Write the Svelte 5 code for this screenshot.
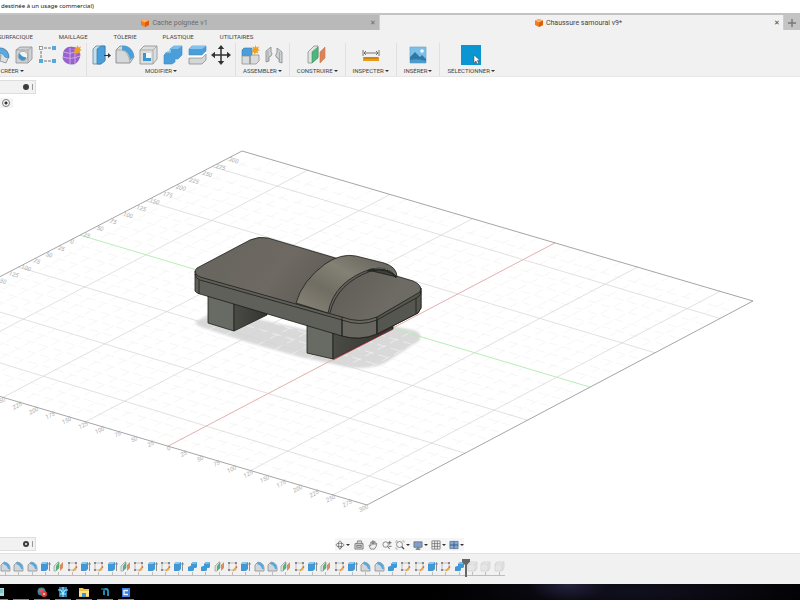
<script>
  const workspaces = ['SURFACIQUE', 'MAILLAGE', 'TÔLERIE', 'PLASTIQUE', 'UTILITAIRES'];

  const groups = [
    { label: 'CRÉER', wide: true, tools: ['revolve', 'hole', 'pattern', 'form'] },
    { label: 'MODIFIER', tools: ['presspull', 'fillet', 'shell', 'combine', 'split', 'move'] },
    { label: 'ASSEMBLER', tools: ['component', 'joint'] },
    { label: 'CONSTRUIRE', tools: ['plane'] },
    { label: 'INSPECTER', tools: ['measure'] },
    { label: 'INSÉRER', tools: ['image'] },
    { label: 'SÉLECTIONNER', tools: ['select'] }
  ];

  // f fillet, e extrude, p plane, s sketch, c combine, x rolled back
  const features = [...'fffepsesepsesecc' + 'pseffpsepse' + 'ffcssesc' + 'xxx'];
  const featureNames = {
    f: 'Congé', e: 'Extrusion', p: 'Plan', s: 'Esquisse', c: 'Combiner', x: 'Fonction inactive'
  };

  const navTools = [
    { id: 'orbit', menu: true },
    { id: 'look' },
    { id: 'pan' },
    { id: 'zoom' },
    { id: 'fit', menu: true },
    { id: 'display', menu: true },
    { id: 'grid', menu: true },
    { id: 'views', menu: true }
  ];

  const apps = ['notes', '', 'browser', 'network', 'files', 'fusion', 'capture'];

  // Corners of the ground grid
  const N = [242, 151];
  const E = [753, 301];
  const S = [367, 505];
  const W = [-147, 353];
  const border = [N, E, S, W].map((p) => p.join(',')).join(' ');

  const mix = (p, q, t) => [p[0] + (q[0] - p[0]) * t, p[1] + (q[1] - p[1]) * t];
  const seg = (p, q) => `M${p[0]} ${p[1]}L${q[0]} ${q[1]}`;

  // Point of each border edge at a given x
  const onLeft = (x) => mix(N, W, (N[0] - x) / (N[0] - W[0]));
  const onRight = (x) => mix(E, S, (E[0] - x) / (E[0] - S[0]));
  const onTop = (x) => mix(N, E, (x - N[0]) / (E[0] - N[0]));
  const onBottom = (x) => mix(W, S, (x - W[0]) / (S[0] - W[0]));

  // x of the i-th 25 mm step, counted from the axis
  const leftX = (i) => 80 + (i > 0 ? 13.2 : 12.3) * i;
  const rightX = (i) => 590 + (i > 0 ? 13 : 12.5) * i;

  let major = '';
  let minor = '';
  for (let i = -17; i <= 11; i++) {
    const d = seg(onLeft(leftX(i)), onRight(rightX(i)));
    if (i % 5) minor += d;
    else if (i) major += d;
  }
  for (let i = -18; i <= 11; i++) {
    const d = seg(onTop(555 + 16.5 * i), onBottom(168 + 16.5 * i));
    if (i % 5) minor += d;
    else if (i) major += d;
  }

  const leftLabels = [];
  for (let i = 12; i >= -6; i--) {
    leftLabels.push({ p: onLeft(leftX(i)), t: Math.abs(i * 25) });
  }
  const bottomLabels = [];
  for (let i = -10; i <= 12; i++) {
    bottomLabels.push({ p: onBottom(168 + 16.5 * i), t: Math.abs(i * 25) });
  }
</script>

{#snippet cube()}
  <svg class="cube" viewBox="0 0 8 8" aria-hidden="true">
    <path d="M4 0 8 1.6V6L4 8 0 6V1.6z" fill="#f47b20" />
    <path d="M4 0 8 1.6 4 3.4 0 1.6z" fill="#ffb26b" />
    <path d="M4 3.4 8 1.6V6L4 8z" fill="#d95d0c" />
  </svg>
{/snippet}

{#snippet star()}
  <path
    d="M15.5 0l1 2.6 2.6-1-1.2 2.5 2.1 1.1-2.5.8.9 2.6-2.4-1.2-1.3 2.4-.8-2.6-2.5.7 1.4-2.3-2-1.2 2.5-.5-.9-2.4 2.3 1.1z"
    fill="#f0a01c"
  />
{/snippet}

{#snippet toolIcon(id)}
  <svg class="tool-icon" viewBox="0 0 20 20" aria-hidden="true">
    {#if id === 'revolve'}
      <path d="M4 6q7-6 13 0l2 5-3 7-6-2 1-6-7 1z" fill="#dcdfe2" stroke="#858a8e" stroke-width=".8" />
      <path d="M5 5q8-5 13 3l1 5-4-1q-2-5-9-3z" fill="#5aa9e0" stroke="#3a7fb2" stroke-width=".6" />
    {:else if id === 'hole'}
      <path d="M2 5l4-3h12v12l-4 4H2z" fill="#cfd1d2" stroke="#8d9092" stroke-width=".8" />
      <path d="M2 5h12v13M14 5l4-3" fill="none" stroke="#999" stroke-width=".7" />
      <circle cx="9" cy="11" r="4.8" fill="#f3f3f3" stroke="#8b8e90" stroke-width=".7" />
      <path d="M5.500 8q2 4 7 4.500-1 3-4 3-4-1-4-4.500z" fill="#3c94cf" />
    {:else if id === 'pattern'}
      <path d="M3 6v8M6 3h8M6 16h8" fill="none" stroke="#555" stroke-width=".8" stroke-dasharray="3 1" />
      <rect x="1.500" y="1.500" width="3" height="3" fill="#fff" stroke="#777" stroke-width=".7" />
      <path d="M14 1h4v4h-4zM1 14h4v4H1zM14 14h4v4h-4z" fill="#55a7df" />
    {:else if id === 'form'}
      <path d="M2 6q2-4 7-4 6 0 8 4l1 4q-1 7-6 9H8Q2 18 1 13z" fill="#9863cb" stroke="#8455b8" stroke-width=".7" />
      <path d="M2 7q6 3 11 0l4 0M8 3v16M13 7v12M1 12q8 3 17-1" fill="none" stroke="#cda7ed" />
      {@render star()}
    {:else if id === 'presspull'}
      <path d="M2 4l3-3h9v14l-4 4H2z" fill="#c5dff0" stroke="#668799" stroke-width=".8" />
      <path d="M6 4l4-3h4v15l-4 3H6z" fill="#4a9fd9" stroke="#347aa9" stroke-width=".7" />
      <path d="M13 10h4v-2l3 2.500-3 2.500v-2h-4z" fill="#333" />
    {:else if id === 'fillet'}
      <path d="M1 5l4-4h5q8 2 9 11l-4 6H1z" fill="#d6d8d9" stroke="#7d8183" stroke-width=".8" />
      <path d="M7 1h4q7 2 8 11l-4 3q-1-9-8-10z" fill="#4b9fda" />
      <path d="M1 5h5q8 1 9 13" fill="none" stroke="#999" stroke-width=".7" />
    {:else if id === 'shell'}
      <path d="M1 5l4-4h13v13l-4 5H1z" fill="#dcdede" stroke="#8a8e90" stroke-width=".8" />
      <path d="M1 5h13v14M14 5l4-4" fill="none" stroke="#999" stroke-width=".7" />
      <path d="M4 8h8v8H4z" fill="#f7f7f7" />
      <path d="M4 8h3v5h5v3H4z" fill="#3e95cf" />
    {:else if id === 'combine'}
      <path d="M1 10l3-3h3V4l4-3h8v9l-4 4h-3v3l-3 2H1z" fill="#4a9eda" stroke="#4089bd" stroke-width=".6" />
      <path d="M4 7h3V4l4-3h8l-4 3H8v4H1z" fill="#7dbde9" />
    {:else if id === 'split'}
      <path d="M2 4l3-3h14v5l-4 4H2z" fill="#4a9eda" stroke="#4089bd" stroke-width=".6" />
      <path d="M5 1h14l-4 3H2z" fill="#83c3ed" />
      <path d="M2 13h13l4-4v6l-4 4H2z" fill="#d4d6d7" stroke="#8d9193" stroke-width=".8" />
      <path d="M1 11.500h14l4-4" fill="none" stroke="#fff" stroke-width="1.500" />
    {:else if id === 'move'}
      <path d="M10 2v16M2 10h16" stroke="#333" stroke-width="1.500" />
      <path d="M10 0l3.200 4H6.800zM10 20l3.200-4H6.800zM0 10l4-3.200v6.400zM20 10l-4-3.200v6.400z" fill="#333" />
    {:else if id === 'component'}
      <path d="M2 5l2-2h8v8H2z" fill="#4a9eda" stroke="#347eb3" stroke-width=".6" />
      <path d="M2 11h8v8H2zM10 11l2-1h7v6l-3 3h-6zM10 19v-8" fill="#d9dbdc" stroke="#909496" stroke-width=".8" />
      {@render star()}
    {:else if id === 'joint'}
      <path d="M2 6l5-4v5q2 1 0 4l-2 1v4l-3 1z" fill="#cfd2d3" stroke="#85898b" stroke-width=".8" />
      <path d="M18 7l-5-4v5q-3 2 0 5l2 1v3l3 1z" fill="#cfd2d3" stroke="#85898b" stroke-width=".8" />
      <path d="M4 6v10M15.500 7v9" stroke="#999" stroke-width=".7" />
    {:else if id === 'plane'}
      <path d="M1 7l6-6h4v11l-6 6H1z" fill="#e1e4e3" stroke="#85908b" stroke-width=".8" />
      <path d="M5 7l6-5v11l-6 5z" fill="#4fb67a" stroke="#3b9463" stroke-width=".6" />
      <path d="M13 7l5-5v11l-5 5z" fill="#dd8358" stroke="#cf7448" stroke-width=".6" />
    {:else if id === 'measure'}
      <path d="M2 5v6M18 5v6M3 8h14M5 6L3 8l2 2M15 6l2 2-2 2" fill="none" stroke="#555" stroke-width=".8" />
      <path d="M2 12h16v4H2z" fill="#eb9b17" />
      <path d="M4 12v2M6 12v2M8 12v2M10 12v2M12 12v2M14 12v2M16 12v2" stroke="#9c5e00" stroke-width=".7" />
    {:else if id === 'image'}
      <path d="M2 2h16v16H2z" fill="#7cc0ea" stroke="#6ba6cc" stroke-width=".7" />
      <circle cx="14" cy="6" r="1.800" fill="#f3fbff" />
      <path d="M2 12l5-5 5 5 2-2 4 4v4H2z" fill="#2e78a8" />
      <path d="M2 15q8-2 16 1v2H2z" fill="#4b9ccd" />
    {:else}
      <path d="M0 0h20v20H0z" fill="#0a96d2" />
      <path d="M13 10v8l2-2 1 3 1.600-.7-1.200-2.800h2.600z" fill="#fff" stroke="#444" stroke-width=".5" />
    {/if}
  </svg>
{/snippet}

{#snippet featureIcon(id)}
  <svg class="feature-icon" viewBox="0 0 11 11" aria-hidden="true">
    {#if id === 'f'}
      <path d="M1 4l3-3q6 1 6 6v3H1z" fill="#d2d6d9" stroke="#8a8f92" stroke-width=".8" />
      <path d="M4 1q6 1 6 7L8 8Q7 4 3 3z" fill="#58a8de" />
    {:else if id === 'e'}
      <path d="M1 3l2-2h5v7l-2 2H1z" fill="#4298d5" />
      <path d="M3 1h5L6 3H1z" fill="#8ac7ee" />
      <path d="M9.500 10V2M8.500 3.500l1-2 1 2" fill="none" stroke="#777" stroke-width=".8" />
    {:else if id === 'p'}
      <path d="M1 5l4-4h1v6l-3 3H1z" fill="#dce2df" stroke="#839087" stroke-width=".6" />
      <path d="M3 5l3-4v6l-3 3z" fill="#4fb47b" />
      <path d="M7 4l3-3v6l-3 3z" fill="#dd8c60" />
    {:else if id === 's'}
      <path d="M2 2h7v7H2z" fill="none" stroke="#999" stroke-width=".6" />
      <path d="M1 1h2v2H1zM8 1h2v2H8zM1 8h2v2H1z" fill="#888" />
      <path d="M6 10l3.500-4" stroke="#f0a02a" stroke-width="1.500" />
      <path d="M9 6.500l1-1" stroke="#dc5c39" stroke-width="1.500" />
    {:else if id === 'c'}
      <path d="M1 6l2-1h1V3l2-2h4v5L9 7H7v2l-1 1H1z" fill="#3f99d7" />
      <path d="M4 3l2-2h4L9 3z" fill="#76bbe8" />
    {:else}
      <path d="M1 3l2-2h7v6l-2 3H1zM1 3h7l2-2M8 3v7" fill="#e6e6e6" stroke="#cfcfcf" stroke-width=".7" />
    {/if}
  </svg>
{/snippet}

{#snippet navIcon(id)}
  <svg class="nav-icon" viewBox="0 0 11 11" aria-hidden="true" fill="none" stroke="#666" stroke-width=".8">
    {#if id === 'orbit'}
      <ellipse cx="5.500" cy="5.500" rx="4.500" ry="2" />
      <ellipse cx="5.500" cy="5.500" rx="1.900" ry="4.500" />
      <path d="M5 6l2 2-2 2" />
    {:else if id === 'look'}
      <path d="M1 4h9v6H1zM3 4l1-3h4l1 3M3 6h5v2H3z" fill="#d5d5d5" />
    {:else if id === 'pan'}
      <path d="M3 10L1 6l1-.5 1.200 1L3 2.500l1-.5.8 3V1l1-.2.5 4L7 1.500l.9.300L7.800 5 9 3.500l.8.500-1 3.500L7 10z" fill="#eee" />
    {:else if id === 'zoom'}
      <circle cx="4" cy="5" r="3" />
      <path d="M6 7l2.500 3M8.500 1v4M6.500 3h4M7.500 7h3" stroke="#444" />
    {:else if id === 'fit'}
      <path d="M1 3V1h2M8 1h2v2M1 8v2h2" stroke="#888" stroke-width=".6" />
      <circle cx="5" cy="5" r="3.300" />
      <path d="M7.500 7.500l2.500 2.500" stroke="#444" stroke-width="1.400" />
    {:else if id === 'display'}
      <path d="M1 2h9v6H1z" fill="#7f9fce" />
      <path d="M5.500 8v2M3 10h5" stroke-width="1.200" />
    {:else if id === 'grid'}
      <path d="M1 1h9v9H1zM1 4h9M1 7h9M4 1v9M7 1v9" />
    {:else}
      <path d="M1 1.500h9v8H1z" fill="#86abd8" stroke="#536c91" />
      <path d="M5.500 1.500v8M1 5.500h9" stroke="#304663" />
    {/if}
  </svg>
{/snippet}

{#snippet appIcon(id)}
  <svg class="app-icon" viewBox="0 0 10 10" aria-hidden="true">
    {#if id === 'notes'}
      <path d="M1 1h8v8H1z" fill="#a6dcda" />
      <path d="M2 3h6M2 5h6" stroke="#5aa6b3" />
    {:else if id === 'browser'}
      <circle cx="4.500" cy="4.500" r="4" fill="#3a8296" />
      <path d="M2 2q4-1 5 1L5 6 2 5z" fill="#e0564b" />
      <circle cx="7" cy="7" r="3" fill="#e43b3e" />
      <path d="M6 6h2v2H6z" fill="#ffb4a8" />
    {:else if id === 'network'}
      <path d="M1 0h8v10H1z" fill="#1f7fb6" />
      <path d="M0 3h3l2 4 2-4h3M5 0v10M2 7h6" fill="none" stroke="#b9f0ff" />
    {:else if id === 'files'}
      <path d="M0 1h4l1 1h5v8H0z" fill="#efc14e" />
      <path d="M0 4h10v5H0z" fill="#ffe18a" />
      <path d="M3 6h4v4H3z" fill="#4298c8" />
    {:else if id === 'fusion'}
      <path d="M4 8V4q0-2 2-2t2 2v5" fill="none" stroke="#229bc2" stroke-width="1.800" />
      <path d="M1 2h3v2" fill="none" stroke="#1c607f" stroke-width="1.400" />
    {:else if id === 'capture'}
      <path d="M1 1h8v9H1z" fill="#3b7fe0" />
      <path d="M7 3.500H3v4h4" fill="none" stroke="#e5f2ff" stroke-width="1.400" />
    {/if}
  </svg>
{/snippet}

<div class="window">
  <header class="titlebar">destinée à un usage commercial)</header>

  <div class="tabs">
    <div class="tab">
      <button class="tab-title">{@render cube()}Cache poignée v1</button>
      <button class="close" aria-label="Fermer Cache poignée v1">✕</button>
    </div>
    <div class="tab active">
      <button class="tab-title">{@render cube()}Chaussure samourai v9*</button>
      <button class="close" aria-label="Fermer Chaussure samourai v9">✕</button>
    </div>
    <button class="new-tab" aria-label="Nouvelle conception">
      <svg viewBox="0 0 8 8"><path d="M4 0v8M0 4h8" stroke="#777" stroke-width="1.400" /></svg>
    </button>
  </div>

  <section class="ribbon">
    <nav class="workspaces">
      {#each workspaces as name}
        <button>{name}</button>
      {/each}
    </nav>
    <div class="groups">
      {#each groups as group}
        <div class="group" class:wide={group.wide}>
          <div class="tools">
            {#each group.tools as tool}
              <button aria-label={tool}>{@render toolIcon(tool)}</button>
            {/each}
          </div>
          <button class="group-label">{group.label}<i class="caret"></i></button>
        </div>
      {/each}
    </div>
  </section>

  <main class="viewport">
    <svg class="scene" viewBox="0 77 800 476" preserveAspectRatio="xMidYMid slice" role="img" aria-label="Chaussure samourai">
      <defs>
        <linearGradient id="top" x1="0" y1="0" x2="1" y2="0.3">
          <stop offset="0" stop-color="#65645e" />
          <stop offset="0.45" stop-color="#6e6962" />
          <stop offset="0.7" stop-color="#5f5d57" />
          <stop offset="1" stop-color="#6e6a64" />
        </linearGradient>
        <linearGradient id="strap" x1="0" y1="1" x2="1" y2="0">
          <stop offset="0" stop-color="#8a8679" />
          <stop offset="0.35" stop-color="#706d63" />
          <stop offset="0.6" stop-color="#838074" />
          <stop offset="1" stop-color="#5e5e56" />
        </linearGradient>
        <linearGradient id="leg" x1="0" y1="0" x2="1" y2="0">
          <stop offset="0" stop-color="#4b4b46" />
          <stop offset="1" stop-color="#33332f" />
        </linearGradient>
        <filter id="soft"><feGaussianBlur stdDeviation="1" /></filter>
      </defs>

      <path
        d="M195 322L208 315 250 317 307 330 393 326 413 330Q424 333 419 341L385 363Q371 370 347 367L300 357 247 342 207 329Q196 326 195 322z"
        fill="#d9d9d9"
        filter="url(#soft)"
      />

      <path class="minor" d={minor} />
      <path class="major" d={major} />
      <path class="green" d={seg(onLeft(80), onRight(590))} />
      <path class="red" d={seg(onTop(555), onBottom(168))} />
      <polygon class="border" points={border} />

      <g class="ticks">
        {#each leftLabels as { p, t }}
          <text transform="translate({p[0] - 10} {p[1] + 8}) rotate(16)">{t}</text>
        {/each}
        {#each bottomLabels as { p, t }}
          <text transform="translate({p[0] + 3} {p[1] + 3}) rotate(-28)" text-anchor="end">{t}</text>
        {/each}
      </g>

      <g class="shoe">
        <path d="M208 294V323L234 331V303z" fill="#686a64" />
        <path d="M234 303V331L267 315V309z" fill="url(#leg)" />
        <path d="M307 324V353L333 359V332z" fill="#686a64" />
        <path d="M333 332V359L393 329V320z" fill="url(#leg)" />
        <path
          d="M195 271V291Q196 293 200 294L342 336Q360 341 377 334L418 313 421 308V288z"
          fill="#5f6059"
        />
        <path d="M342 317V336Q360 341 377 334V317z" fill="#67675f" />
        <path d="M377 317V334L418 313 421 308V288z" fill="#55564f" />
        <path
          d="M197 268L250 240Q259 236 268 238L413 281Q423 285 420 292L377 317Q360 324 342 317L200 277Q192 273 197 268z"
          fill="url(#top)"
        />
        <path d="M195 274Q196 279 200 280L342 320Q360 327 377 320L418 297Q421 295 421 291" fill="none" />
        <path d="M199 280V294M342 320V336M377 320V334M416 298V314" fill="none" />
        <path d="M367 271Q385 264 397 277L372 271z" fill="#3d3e37" />
        <path
          d="M296 303Q302 281 325 264Q341 253 356 256L384 263Q397 267 397 277Q387 264 371 269Q334 281 328 313z"
          fill="url(#strap)"
        />
        <path d="M330 313Q337 283 371 271Q388 267 396 278" fill="none" />
      </g>
      <path class="red-edge" d="M333 360L393 329" />
    </svg>

    <aside class="browser">
      <div class="panel">
        <button class="dot" aria-label="Réduire le navigateur"></button><i class="grip"></i>
      </div>
      <label class="eye"><input type="radio" name="root" checked aria-label="Activer le composant" /></label>
    </aside>

    <div class="comments panel">
      <button class="dot plus" aria-label="Développer les commentaires"></button><i class="grip"></i>
    </div>

    <nav class="navbar">
      {#each navTools as tool}
        <button class:menu={tool.menu} aria-label={tool.id}>
          {@render navIcon(tool.id)}{#if tool.menu}<i class="caret"></i>{/if}
        </button>
      {/each}
    </nav>
  </main>

  <section class="timeline">
    <ol>
      {#each features as f, i}
        <li>
          <button aria-label={featureNames[f]}>{@render featureIcon(f)}</button>
          {#if i === 34}
            <svg class="playhead" viewBox="0 0 8 18" aria-hidden="true">
              <path d="M0 0h8v3L5 6v12H3V6L0 3z" fill="#666" />
            </svg>
          {/if}
        </li>
      {/each}
    </ol>
  </section>

  <footer class="taskbar">
    {#each apps as app}
      <button aria-label={app || 'application'}>{@render appIcon(app)}</button>
    {/each}
  </footer>
</div>

<style>
  :global(body) {
    margin: 0;
    background: #fff;
  }

  .window {
    display: flex;
    flex-direction: column;
    height: 100vh;
    overflow: hidden;
    font-family: Roboto, 'Liberation Sans', sans-serif;
    font-size: 6px;
    color: #444;
  }

  button {
    display: flex;
    align-items: center;
    justify-content: center;
    margin: 0;
    padding: 0;
    border: 0;
    background: none;
    color: inherit;
    font: inherit;
    white-space: nowrap;
  }

  svg {
    display: block;
    flex: none;
  }

  .titlebar {
    height: 13px;
    padding-left: 1px;
    line-height: 13px;
    font-family: 'Noto Sans', sans-serif;
    color: #111;
    white-space: nowrap;
  }

  .tabs {
    display: flex;
    height: 15px;
    margin-left: -24px;
    border-top: 2px solid #c3c3c3;
    background: #b9b9b9;
    font-size: 7px;
  }

  .tab {
    display: flex;
    flex: 1;
    box-sizing: border-box;
    padding-left: 6px;
    border-right: 1px solid #cdcdcd;
    color: #6c6c6c;
  }

  .tab.active {
    background: #f1f1f1;
    color: #444;
  }

  .tab-title {
    flex: 1;
    gap: 3px;
  }

  .cube {
    width: 8px;
    height: 8px;
  }

  .close {
    width: 12px;
    font-family: 'DejaVu Sans', sans-serif;
    font-size: 7px;
  }

  .new-tab {
    width: 16px;
    background: #c4c4c4;
  }

  .new-tab svg {
    width: 8px;
    height: 8px;
  }

  .ribbon {
    height: 47px;
    box-sizing: border-box;
    border-bottom: 1px solid #e8e8e8;
    background: #f1f1f1;
    overflow: hidden;
  }

  .workspaces {
    display: flex;
    gap: 26px;
    height: 13px;
    margin-left: -2px;
  }

  .groups {
    display: flex;
    margin-left: -62px;
  }

  .group {
    display: flex;
    flex-direction: column;
    align-items: center;
    padding: 2px 4px 0;
    border-right: 1px solid #e0e0e0;
  }

  .group:last-child {
    border-right: 0;
  }

  .tools {
    display: flex;
    gap: 4px;
  }

  .wide .tools {
    justify-content: flex-end;
    width: 140px;
  }

  .tool-icon {
    width: 20px;
    height: 20px;
  }

  .group-label {
    height: 11px;
    padding: 0 3px;
    gap: 1px;
  }

  .caret {
    border: 2px solid transparent;
    border-top-color: #333;
    border-bottom: 0;
  }

  .viewport {
    position: relative;
    flex: 1;
    min-height: 0;
    background: #fff;
  }

  .scene {
    width: 100%;
    height: 100%;
  }

  .minor,
  .major,
  .green,
  .red,
  .border {
    fill: none;
  }

  .minor {
    stroke: #f2f2f2;
    stroke-width: 0.7;
    stroke-dasharray: 9 5;
  }

  .major {
    stroke: #d4d4d4;
    stroke-width: 0.7;
  }

  .green {
    stroke: #b9edb9;
  }

  .red {
    stroke: #e5b0b0;
  }

  .border {
    stroke: #8e8e8e;
    stroke-width: 0.8;
  }

  .ticks {
    fill: #acacac;
    font-size: 6px;
    font-style: italic;
  }

  .shoe {
    stroke: #1d1e1b;
    stroke-width: 0.8;
    stroke-linejoin: round;
  }

  .red-edge {
    stroke: #b3303a;
    stroke-width: 0.8;
  }

  .browser {
    position: absolute;
    top: 3px;
    left: 0;
  }

  .panel {
    display: flex;
    align-items: center;
    justify-content: flex-end;
    gap: 3px;
    box-sizing: border-box;
    width: 36px;
    height: 14px;
    padding-right: 2px;
    border: 1px solid #dedede;
    border-left: 0;
    background: #f2f2f2;
  }

  .comments {
    position: absolute;
    bottom: 2px;
    left: 0;
  }

  .dot {
    width: 6px;
    height: 6px;
    border-radius: 50%;
    background: #3c3c3c;
  }

  .plus {
    background: radial-gradient(circle, #ccc 1px, #3c3c3c 1px);
  }

  .grip {
    width: 1px;
    height: 6px;
    background: #999;
  }

  .eye {
    display: flex;
    align-items: center;
    width: 13px;
    height: 10px;
    margin-top: 4px;
    padding-left: 2px;
    box-sizing: border-box;
    background: #f4f4f4;
  }

  .eye input {
    appearance: none;
    width: 8px;
    height: 8px;
    margin: 0;
    border: 1px solid #777;
    border-radius: 50%;
    background: radial-gradient(circle, #333 1px, #fff 2px);
  }

  .navbar {
    position: absolute;
    bottom: 2px;
    left: 50%;
    display: flex;
    align-items: center;
    gap: 3px;
    height: 13px;
    margin-left: -65px;
    background: #f6f6f6;
  }

  .navbar button {
    width: 11px;
    gap: 1px;
  }

  .navbar .menu {
    width: 15px;
  }

  .nav-icon {
    width: 10px;
    height: 10px;
  }

  .timeline {
    height: 31px;
    box-sizing: border-box;
    padding-top: 7px;
    border-top: 1px solid #e2e2e2;
    background: #f1f1f1;
  }

  .timeline ol {
    display: flex;
    justify-content: space-between;
    width: 505px;
    height: 14px;
    margin: 0;
    padding: 0;
    border-bottom: 1px solid #bdbdbd;
    list-style: none;
  }

  .timeline li {
    position: relative;
    display: flex;
    flex-direction: column;
    align-items: center;
  }

  .timeline li::after {
    content: '';
    width: 1px;
    flex: 1;
    background: #bdbdbd;
  }

  .feature-icon {
    width: 11px;
    height: 11px;
  }

  .playhead {
    position: absolute;
    top: -2px;
    right: -5px;
    width: 8px;
    height: 18px;
  }

  .taskbar {
    display: flex;
    gap: 5px;
    height: 16px;
    margin-left: -8px;
    background: radial-gradient(ellipse 40px 18px at 576px 0, #25223d, transparent),
      radial-gradient(ellipse 200px 30px at 640px 8px, #11101f, transparent), #000;
  }

  .taskbar button {
    box-sizing: border-box;
    width: 16px;
    border-bottom: 1px solid #8488b8;
  }

  .app-icon {
    width: 10px;
    height: 10px;
  }
</style>
